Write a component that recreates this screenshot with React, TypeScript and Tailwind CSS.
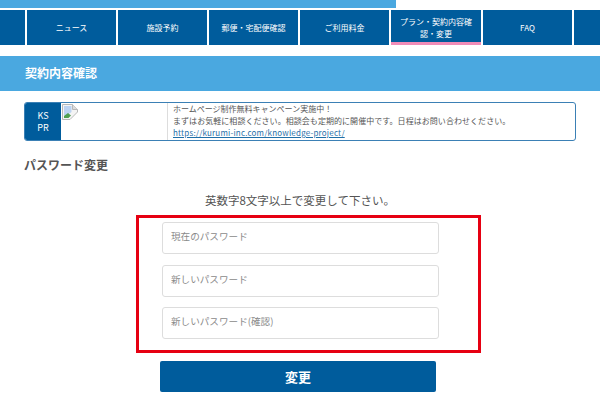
import React from "react";

const navItems = [
  { label: "", width: "w-[25px]" },
  { label: "ニュース", width: "w-[89px]" },
  { label: "施設予約", width: "w-[89px]" },
  { label: "郵便・宅配便確認", width: "w-[89px]" },
  { label: "ご利用料金", width: "w-[89px]" },
  { label: "プラン・契約内容確認・変更", width: "w-[90px]", active: true },
  { label: "FAQ", width: "w-[89px]" },
  { label: "", width: "w-[26px]" },
];

const fields = ["現在のパスワード", "新しいパスワード", "新しいパスワード(確認)"];

// chrome's broken image placeholder
const BrokenImage = () => (
  <svg width="16" height="16" viewBox="0 0 16 16" className="block">
    <path d="M0.5 0.5H10.5L15.5 5.5V8L8 15.5H0.5Z" fill="#f4f4f4" stroke="#b8b8b8" />
    <path d="M10.5 0.5V5.5H15.5" fill="#dcdcdc" stroke="#b8b8b8" />
    <path d="M2 2H9.5V8L6 10.5L2 12Z" fill="#bcd3f2" />
    <path d="M2 14V12L6 9L9 11.5L6.5 14Z" fill="#4fa04f" />
  </svg>
);

export default function App() {
  return (
    <div className="w-[600px] h-[414px] overflow-hidden bg-white font-['Noto_Sans_CJK_JP',sans-serif] text-[#555555]">
      <div className="h-[8px] w-[396px] bg-[#4aa8e0]" />

      <nav className="mt-[2px] flex gap-[2px]">
        {navItems.map((item, i) => (
          <div
            key={i}
            className={`${item.width} h-[35px] shrink-0 flex items-center justify-center bg-[#005c9c] px-[6px] text-center text-[8px] leading-[12px] text-white ${
              item.active ? "border-b-[3px] border-[#f08cb8] pt-[3px]" : ""
            }`}
          >
            {item.label}
          </div>
        ))}
      </nav>

      <h1 className="mt-[11px] h-[35px] flex items-center bg-[#4aa8e0] pl-[25px] pb-[2px] text-[12px] font-bold text-white">
        契約内容確認
      </h1>

      <div className="mx-[24px] mt-[11px] flex h-[39px] overflow-hidden rounded-[3px] border border-[#3b80b5]">
        <div className="flex w-[36px] shrink-0 flex-col items-center justify-center bg-[#005c9c] text-[9px] leading-[12px] text-white">
          <span>KS</span>
          <span>PR</span>
        </div>
        <div className="w-[107px] shrink-0 border-r border-[#dddddd] p-[1px]">
          <BrokenImage />
        </div>
        <div className="pl-[5px] text-[8px] leading-[12px] whitespace-nowrap">
          <p>ホームページ制作無料キャンペーン実施中！</p>
          <p className="tracking-[0.05px]">まずはお気軽に相談ください。相談会も定期的に開催中です。日程はお問い合わせください。</p>
          <a className="tracking-[0.2px] text-[#1f6fa8] underline">https://kurumi-inc.com/knowledge-project/</a>
        </div>
      </div>

      <h2 className="mt-[15px] ml-[24px] text-[12px] leading-[18px] font-bold">パスワード変更</h2>

      <p className="mt-[17px] text-center text-[11.5px] leading-[18px]">英数字8文字以上で変更して下さい。</p>

      <div className="mt-[6px] ml-[136px] flex h-[138px] w-[345px] flex-col gap-[10.5px] border-[3px] border-[#e60012] pt-[4px] pl-[23px]">
        {fields.map((f) => (
          <input
            key={f}
            type="password"
            placeholder={f}
            className="h-[32px] w-[277px] rounded-[3px] border border-[#dddddd] bg-white px-[8px] pb-[4px] text-[9.6px] placeholder:text-[#8a8a8a]"
          />
        ))}
      </div>

      <button className="mt-[8px] ml-[160px] block h-[31px] w-[276px] rounded-[2px] bg-[#005c9c] text-[13px] font-bold text-white">
        変更
      </button>
    </div>
  );
}
